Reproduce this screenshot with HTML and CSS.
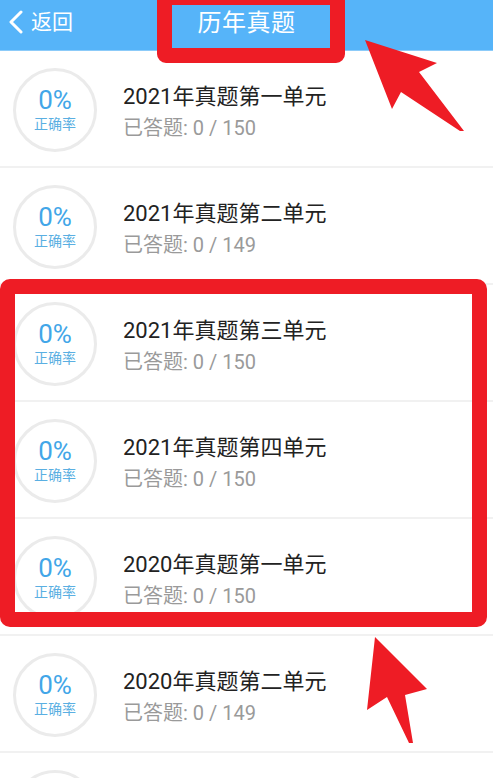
FILE: index.html
```html
<!DOCTYPE html>
<html lang="zh-CN">
<head>
<meta charset="utf-8">
<title>历年真题</title>
<link rel="stylesheet" href="styles.css">
</head>
<body>
<div class="page">
  <header class="topbar">
    <a class="back">
      <svg class="chev" width="16" height="24" viewBox="0 0 16 24"><path d="M13 2 L3 12 L13 22" fill="none" stroke="#fff" stroke-width="3" stroke-linecap="round" stroke-linejoin="round"/></svg>
      <span>返回</span>
    </a>
    <h1 class="title">历年真题</h1>
    <span class="spacer"></span>
  </header>

  <ul class="list">
    <li class="row">
      <div class="ring"><span class="pct">0%</span><span class="lbl">正确率</span></div>
      <div class="info"><div class="name">2021年真题第一单元</div><div class="meta">已答题: 0 / 150</div></div>
    </li>
    <li class="row">
      <div class="ring"><span class="pct">0%</span><span class="lbl">正确率</span></div>
      <div class="info"><div class="name">2021年真题第二单元</div><div class="meta">已答题: 0 / 149</div></div>
    </li>
    <li class="row">
      <div class="ring"><span class="pct">0%</span><span class="lbl">正确率</span></div>
      <div class="info"><div class="name">2021年真题第三单元</div><div class="meta">已答题: 0 / 150</div></div>
    </li>
    <li class="row">
      <div class="ring"><span class="pct">0%</span><span class="lbl">正确率</span></div>
      <div class="info"><div class="name">2021年真题第四单元</div><div class="meta">已答题: 0 / 150</div></div>
    </li>
    <li class="row">
      <div class="ring"><span class="pct">0%</span><span class="lbl">正确率</span></div>
      <div class="info"><div class="name">2020年真题第一单元</div><div class="meta">已答题: 0 / 150</div></div>
    </li>
    <li class="row">
      <div class="ring"><span class="pct">0%</span><span class="lbl">正确率</span></div>
      <div class="info"><div class="name">2020年真题第二单元</div><div class="meta">已答题: 0 / 149</div></div>
    </li>
    <li class="row">
      <div class="ring"></div>
    </li>
  </ul>

  <div class="mark mark-title"></div>
  <div class="mark mark-rows"></div>
  <svg class="arrows" width="493" height="778" viewBox="0 0 493 778">
    <polygon points="365,40 437,63 419,72 464,131 460,131 401,92 392,109" fill="#ee1c25"/>
    <polygon points="375,637 427,689 405,695 413,743 409,743 387,697 367,710" fill="#ee1c25"/>
  </svg>
</div>
</body>
</html>
```

FILE: styles.css
```css
html, body {
  margin: 0;
  padding: 0;
  background: #fff;
}
body {
  font-family: "Roboto", "Noto Sans CJK SC", sans-serif;
  overflow: hidden;
}
.page {
  position: relative;
  width: 493px;
  height: 778px;
  overflow: hidden;
}
.topbar {
  height: 51px;
  background: #56b4f9;
  display: grid;
  grid-template-columns: 1fr auto 1fr;
  align-items: center;
  color: #fff;
  box-sizing: border-box;
  border-bottom: 1px solid #8ccbf9;
}
.back {
  display: flex;
  align-items: center;
  gap: 7px;
  padding-left: 8px;
  font-size: 21px;
  line-height: 30px;
  margin-top: -6px;
}
.chev { display: block; }
.title {
  margin: -4px 0 0 0;
  font-size: 24px;
  font-weight: 400;
  line-height: 30px;
  letter-spacing: 0.5px;
}
.list {
  list-style: none;
  margin: 0;
  padding: 0;
}
.row {
  height: 117px;
  box-sizing: border-box;
  border-bottom: 2px solid #f1f1f1;
  display: flex;
  align-items: flex-start;
}
.ring {
  width: 84px;
  height: 84px;
  box-sizing: border-box;
  border: 3px solid #ebebeb;
  border-radius: 50%;
  margin: 17px 0 0 13px;
  display: flex;
  flex-direction: column;
  align-items: center;
  justify-content: center;
  color: #42a6e8;
}
.pct {
  font-size: 26px;
  line-height: 28px;
  font-weight: 400;
  margin-top: -1px;
}
.lbl {
  font-size: 14px;
  line-height: 18px;
  color: #5aafe2;
  margin-top: 1px;
}
.info {
  margin-left: 26px;
  padding-top: 31px;
}
.name {
  font-size: 22px;
  line-height: 30px;
  color: #222;
}
.meta {
  margin-top: 2px;
  font-size: 20px;
  line-height: 28px;
  color: #9a9a9a;
}
.mark {
  position: absolute;
  border: 15px solid #ee1c25;
  border-radius: 9px;
  box-sizing: border-box;
}
.mark-title {
  left: 157px;
  top: -10px;
  width: 188px;
  height: 73px;
}
.mark-rows {
  left: 0;
  top: 279px;
  width: 487px;
  height: 348px;
  border-radius: 10px;
}
.arrows {
  position: absolute;
  left: 0;
  top: 0;
  pointer-events: none;
}
```
